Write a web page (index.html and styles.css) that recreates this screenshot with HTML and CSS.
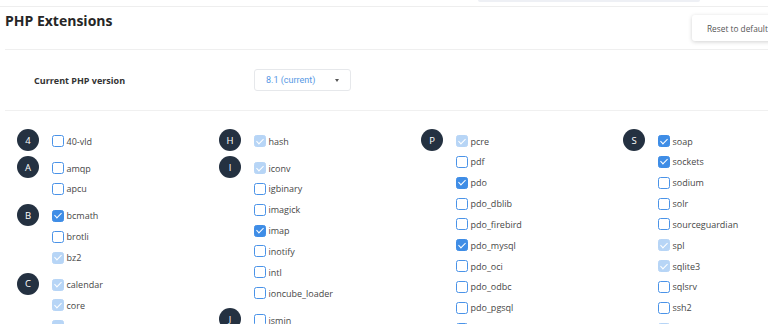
FILE: index.html
```html
<!DOCTYPE html>
<html>
<head>
<meta charset="utf-8">
<link rel="stylesheet" href="styles.css">
</head>
<body>
<div class="page">
  <div class="topbar"><div class="search-edge"></div></div>
  <header class="header">
    <h1 class="title">PHP Extensions</h1>
    <button class="reset">Reset to default</button>
  </header>
  <div class="version-row">
    <div class="version-label">Current PHP version</div>
    <div class="select"><span>8.1 (current)</span><span class="caret"></span></div>
  </div>
  <div class="grid">
    <div class="col">
      <div class="group"><div class="badge">4</div><ul class="items">
        <li class="item"><span class="cb"></span>40-vld</li>
      </ul></div>
      <div class="group"><div class="badge">A</div><ul class="items">
        <li class="item"><span class="cb"></span>amqp</li>
        <li class="item"><span class="cb"></span>apcu</li>
      </ul></div>
      <div class="group"><div class="badge">B</div><ul class="items">
        <li class="item"><span class="cb on"></span>bcmath</li>
        <li class="item"><span class="cb"></span>brotli</li>
        <li class="item"><span class="cb dis"></span>bz2</li>
      </ul></div>
      <div class="group"><div class="badge">C</div><ul class="items">
        <li class="item"><span class="cb dis"></span>calendar</li>
        <li class="item"><span class="cb dis"></span>core</li>
        <li class="item"><span class="cb dis"></span>ctype</li>
      </ul></div>
    </div>
    <div class="col">
      <div class="group"><div class="badge">H</div><ul class="items">
        <li class="item"><span class="cb dis"></span>hash</li>
      </ul></div>
      <div class="group"><div class="badge">I</div><ul class="items">
        <li class="item"><span class="cb dis"></span>iconv</li>
        <li class="item"><span class="cb"></span>igbinary</li>
        <li class="item"><span class="cb"></span>imagick</li>
        <li class="item"><span class="cb on"></span>imap</li>
        <li class="item"><span class="cb"></span>inotify</li>
        <li class="item"><span class="cb"></span>intl</li>
        <li class="item"><span class="cb"></span>ioncube_loader</li>
      </ul></div>
      <div class="group"><div class="badge">J</div><ul class="items">
        <li class="item"><span class="cb"></span>jsmin</li>
      </ul></div>
    </div>
    <div class="col">
      <div class="group"><div class="badge">P</div><ul class="items">
        <li class="item"><span class="cb dis"></span>pcre</li>
        <li class="item"><span class="cb"></span>pdf</li>
        <li class="item"><span class="cb on"></span>pdo</li>
        <li class="item"><span class="cb"></span>pdo_dblib</li>
        <li class="item"><span class="cb"></span>pdo_firebird</li>
        <li class="item"><span class="cb on"></span>pdo_mysql</li>
        <li class="item"><span class="cb"></span>pdo_oci</li>
        <li class="item"><span class="cb"></span>pdo_odbc</li>
        <li class="item"><span class="cb"></span>pdo_pgsql</li>
        <li class="item"><span class="cb"></span>pdo_sqlite</li>
      </ul></div>
    </div>
    <div class="col">
      <div class="group"><div class="badge">S</div><ul class="items">
        <li class="item"><span class="cb on"></span>soap</li>
        <li class="item"><span class="cb on"></span>sockets</li>
        <li class="item"><span class="cb"></span>sodium</li>
        <li class="item"><span class="cb"></span>solr</li>
        <li class="item"><span class="cb"></span>sourceguardian</li>
        <li class="item"><span class="cb dis"></span>spl</li>
        <li class="item"><span class="cb dis"></span>sqlite3</li>
        <li class="item"><span class="cb"></span>sqlsrv</li>
        <li class="item"><span class="cb"></span>ssh2</li>
        <li class="item"><span class="cb dis"></span>standard</li>
      </ul></div>
    </div>
  </div>
</div>
</body>
</html>
```

FILE: styles.css
```css
html, body {
  margin: 0;
  padding: 0;
  background: #ffffff;
  overflow: hidden;
}
body {
  font-family: "Open Sans", "Liberation Sans", sans-serif;
  color: #444;
}
.page {
  width: 840px;
}
.topbar {
  height: 6px;
  border-bottom: 1px solid #eeeeee;
  display: flex;
}
.search-edge {
  margin-left: 478px;
  width: 222px;
  height: 2px;
  background: #eef0f5;
  border-radius: 0 0 4px 4px;
}
.header {
  margin-left: 5px;
  height: 43px;
  box-sizing: border-box;
  border-bottom: 1px solid #efefef;
  display: flex;
  align-items: flex-start;
}
.title {
  flex: 0 0 687px;
  margin: 0;
  padding-top: 4px;
  font-size: 14px;
  line-height: 20px;
  font-weight: 700;
  color: #262626;
}
.reset {
  flex: 0 0 auto;
  margin-top: 8px;
  height: 26px;
  padding: 0 15px;
  border: none;
  border-radius: 3px;
  background: #fff;
  box-shadow: 0 1px 4px rgba(0, 0, 0, 0.18);
  font-family: "Open Sans", "Liberation Sans", sans-serif;
  font-size: 8.3px;
  color: #555;
}
.version-row {
  margin-left: 5px;
  padding-left: 29px;
  height: 61px;
  box-sizing: border-box;
  border-bottom: 1px solid #f0f0f0;
  display: flex;
  align-items: center;
}
.version-label {
  width: 220px;
  font-size: 9px;
  font-weight: 700;
  color: #333;
}
.select {
  width: 97px;
  height: 22px;
  box-sizing: border-box;
  border: 1px solid #e6e8eb;
  border-radius: 3px;
  padding: 0 11px;
  display: flex;
  align-items: center;
  justify-content: space-between;
  font-family: Roboto, "Liberation Sans", sans-serif;
  font-size: 9px;
  color: #5597e4;
}
.caret {
  width: 0;
  height: 0;
  border-left: 2.5px solid transparent;
  border-right: 2.5px solid transparent;
  border-top: 3px solid #555;
}
.grid {
  margin-left: 17px;
  padding-top: 19.6px;
  display: grid;
  grid-template-columns: repeat(4, 202px);
  align-items: start;
}
.group {
  display: flex;
  align-items: flex-start;
  margin-bottom: 6.2px;
}
.badge {
  flex: 0 0 22px;
  width: 22px;
  height: 22px;
  margin-top: -1.5px;
  margin-right: 12.5px;
  border-radius: 50%;
  background: #243141;
  color: #fff;
  font-size: 9.5px;
  display: flex;
  align-items: center;
  justify-content: center;
}
.items {
  list-style: none;
  margin: 0;
  padding: 0;
}
.item {
  height: 20.85px;
  display: flex;
  align-items: center;
  gap: 3px;
  font-size: 9px;
  color: #474747;
}
.cb {
  position: relative;
  flex: 0 0 12px;
  width: 12px;
  height: 12px;
  box-sizing: border-box;
  border: 1.5px solid #4a93e8;
  border-radius: 2.5px;
  background: #fff;
}
.cb.on {
  background: #3f8de6;
  border-color: #3f8de6;
}
.cb.dis {
  background: #b7d5f6;
  border-color: #b7d5f6;
}
.cb.on::after, .cb.dis::after {
  content: "";
  position: absolute;
  left: 3px;
  top: 0.5px;
  width: 3px;
  height: 6px;
  border-right: 1.2px solid #fff;
  border-bottom: 1.2px solid #fff;
  transform: rotate(45deg);
}
```
